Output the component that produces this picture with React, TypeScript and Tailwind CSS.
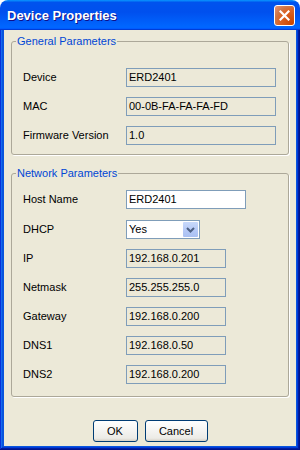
import React from "react";

const font = "font-['Liberation_Sans',Arial,sans-serif]";

function Field({ value, width, white }: { value: string; width: string; white?: boolean }) {
  return (
    <div
      className={`${width} h-[19px] border border-[#7f9db9] ${white ? "bg-white" : "bg-[#ece9d8]"} flex items-center pl-[2px] text-[11px] leading-none text-black whitespace-nowrap`}
    >
      {value}
    </div>
  );
}

function Row({ label, children, className = "" }: { label: string; children: React.ReactNode; className?: string }) {
  return (
    <div className={`flex items-center h-[19px] ${className}`}>
      <div className="w-[103px] text-[11px] leading-none text-black whitespace-nowrap">{label}</div>
      {children}
    </div>
  );
}

function Group({ title, children, className = "" }: { title: string; children: React.ReactNode; className?: string }) {
  return (
    <fieldset className={`border border-[#aca899] rounded-[3px] shadow-[1px_1px_0_#ffffff] ${className}`}>
      <legend className="ml-[4px] px-[1px] text-[11px] leading-[13px] text-[#0046d5]">{title}</legend>
      {children}
    </fieldset>
  );
}

function Chevron() {
  return (
    <svg width="9" height="6" viewBox="0 0 9 6">
      <path d="M1 1 L4.5 4.5 L8 1" stroke="#4d6185" strokeWidth="2" fill="none" />
    </svg>
  );
}

export default function App() {
  return (
    <div className={`w-[300px] h-[450px] flex flex-col bg-white ${font}`}>
      {/* Title bar */}
      <div className="h-[30px] shrink-0 rounded-t-[8px] bg-[linear-gradient(180deg,#0997ff,#0053ee_8%,#0050ee_40%,#0066ff_88%,#0066ff_93%,#005bff_95%,#003dd7_96%,#003dd7)] flex items-center justify-between pl-[7px] pr-[5px]">
        <span className="text-white font-bold text-[13px] leading-none [text-shadow:1px_1px_#0f1089] pt-[1px]">
          Device Properties
        </span>
        <div className="w-[21px] h-[21px] rounded-[3px] border border-white bg-[radial-gradient(circle_at_90%_90%,#cc4600_0%,#dc6527_55%,#cd7546_70%,#e89579_100%)] flex items-center justify-center">
          <svg width="11" height="11" viewBox="0 0 11 11">
            <path d="M1.5 1.5 L9.5 9.5 M9.5 1.5 L1.5 9.5" stroke="#ffffff" strokeWidth="2.2" strokeLinecap="square" />
          </svg>
        </div>
      </div>

      {/* Frame */}
      <div className="flex-1 flex flex-col px-[4px] pb-[4px] bg-[#0855dd] shadow-[inset_-1px_-1px_#00138c,inset_1px_0_#0831d9,inset_-2px_-2px_#001ea0,inset_2px_0_#166aee,inset_-3px_-3px_#003bda,inset_3px_0_#0855dd]">
        <div className="flex-1 bg-[#ece9d8] flex flex-col px-[7px]">
          <Group title="General Parameters" className="mt-[5px]">
            <div className="flex flex-col gap-[10px] pl-[11px] pt-[20px] pb-[9px]">
              <Row label="Device">
                <Field value="ERD2401" width="w-[150px]" />
              </Row>
              <Row label="MAC">
                <Field value="00-0B-FA-FA-FA-FD" width="w-[150px]" />
              </Row>
              <Row label="Firmware Version">
                <Field value="1.0" width="w-[150px]" />
              </Row>
            </div>
          </Group>

          <Group title="Network Parameters" className="mt-[12px]">
            <div className="flex flex-col gap-[10px] pl-[11px] pt-[10px] pb-[12px]">
              <Row label="Host Name" className="mb-[1px]">
                <Field value="ERD2401" width="w-[120px]" white />
              </Row>
              <Row label="DHCP">
                <div className="w-[74px] h-[19px] border border-[#7f9db9] bg-white flex items-center justify-between pl-[2px] pr-[1px]">
                  <span className="text-[11px] leading-none text-black">Yes</span>
                  <div className="w-[15px] h-[15px] rounded-[1px] bg-[linear-gradient(180deg,#c8d9fb,#b4c8f6_60%,#a9c0f2)] flex items-center justify-center">
                    <Chevron />
                  </div>
                </div>
              </Row>
              <Row label="IP">
                <Field value="192.168.0.201" width="w-[100px]" />
              </Row>
              <Row label="Netmask">
                <Field value="255.255.255.0" width="w-[100px]" />
              </Row>
              <Row label="Gateway">
                <Field value="192.168.0.200" width="w-[100px]" />
              </Row>
              <Row label="DNS1">
                <Field value="192.168.0.50" width="w-[100px]" />
              </Row>
              <Row label="DNS2">
                <Field value="192.168.0.200" width="w-[100px]" />
              </Row>
            </div>
          </Group>

          <div className="flex justify-center gap-[7px] mt-[23px]">
            <button className="w-[45px] h-[22px] rounded-[3px] border border-[#003c74] bg-[linear-gradient(180deg,#ffffff,#ecebe6_86%,#d6d0c5)] text-[11px] leading-none text-black">
              OK
            </button>
            <button className="w-[63px] h-[22px] rounded-[3px] border border-[#003c74] bg-[linear-gradient(180deg,#ffffff,#ecebe6_86%,#d6d0c5)] text-[11px] leading-none text-black">
              Cancel
            </button>
          </div>
        </div>
      </div>
    </div>
  );
}
